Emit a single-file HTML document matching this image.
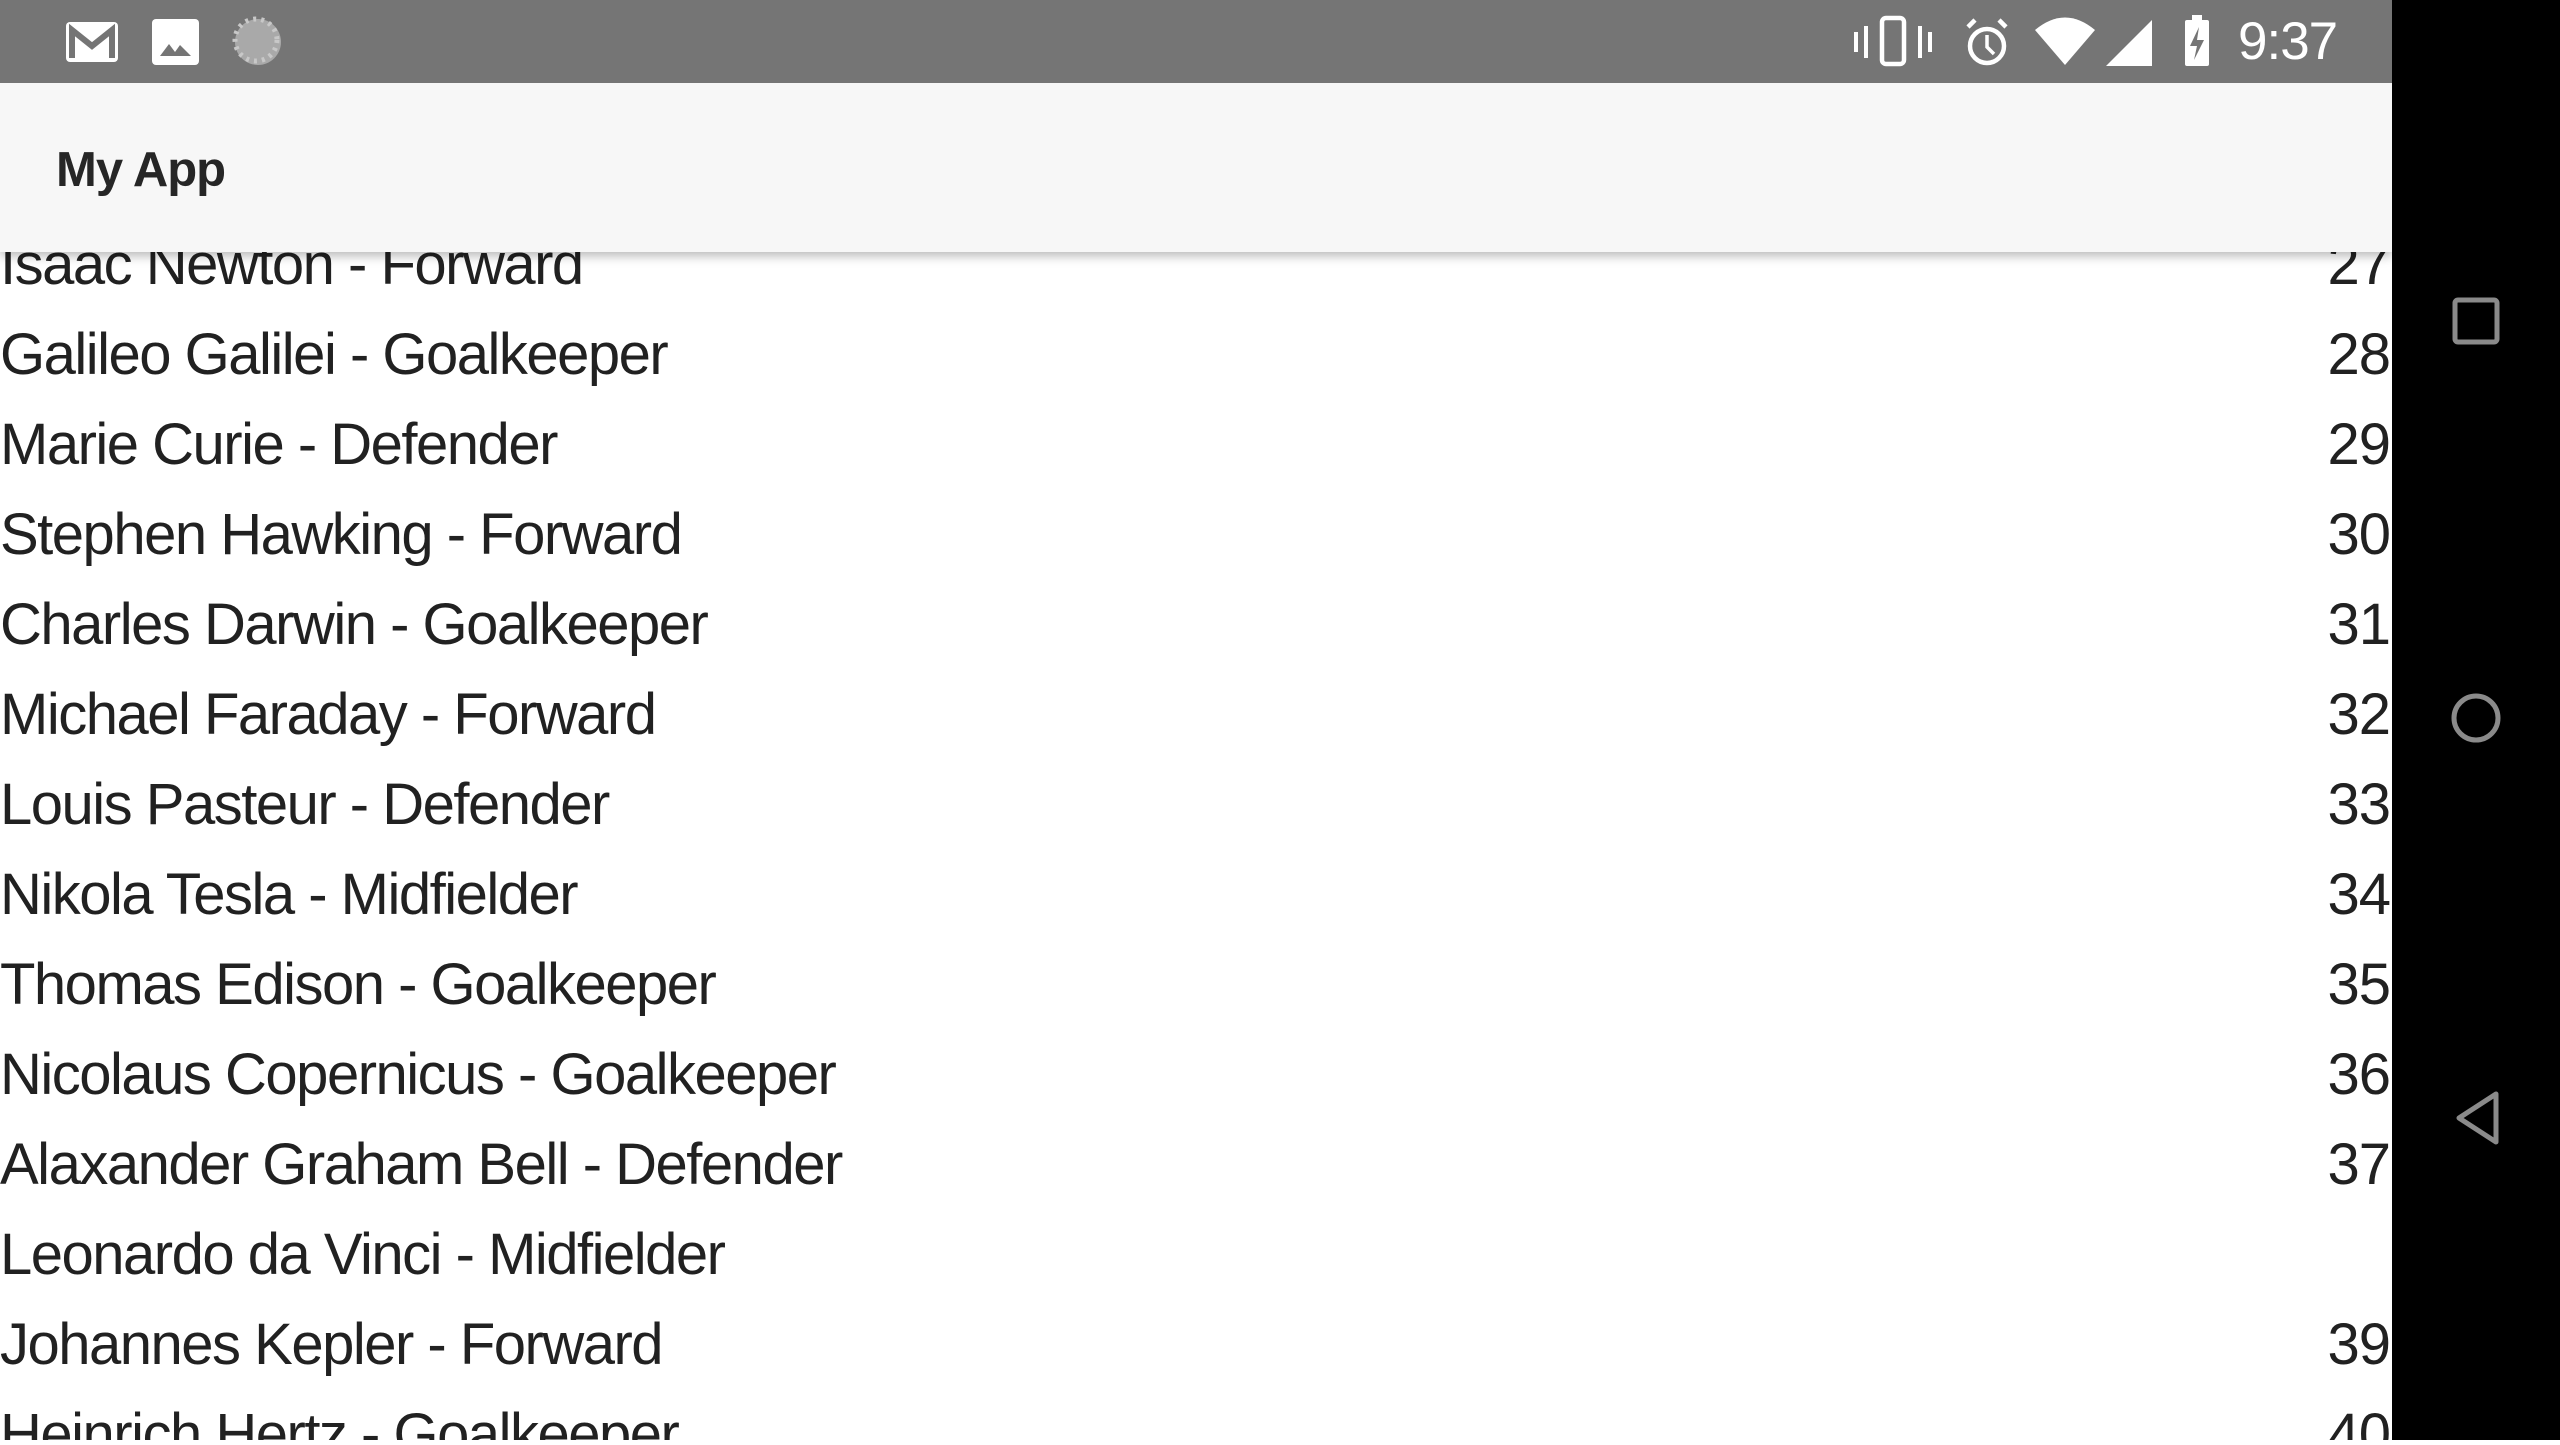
<!DOCTYPE html>
<html><head><meta charset="utf-8"><style>
html,body{margin:0;padding:0;width:2560px;height:1440px;overflow:hidden;background:#fff;font-family:"Liberation Sans",sans-serif}
#list{position:absolute;left:0;top:0;width:2392px;height:1440px;overflow:hidden}
.r{position:absolute;left:0;width:2392px;height:58px;line-height:58px;font-size:58px;color:#212121;letter-spacing:-1.5px;white-space:nowrap}
.r .n{position:absolute;right:2px;top:0;letter-spacing:-1px}
#sb{position:absolute;left:0;top:0;width:2392px;height:83px;background:#757575;z-index:3}
#ab{position:absolute;left:0;top:83px;width:2392px;height:169px;background:#f7f7f7;z-index:2;box-shadow:0 4px 10px rgba(0,0,0,0.28)}
#ab span{position:absolute;left:56px;top:58px;font-size:49px;line-height:58px;font-weight:bold;color:#262626;letter-spacing:-1px}
#nav{position:absolute;left:2392px;top:0;width:168px;height:1440px;background:#000;z-index:4}
#time{position:absolute;left:2238px;top:12px;font-size:53px;line-height:60px;color:#fff;letter-spacing:-1px}
</style></head><body>
<div id="sb">
<svg width="2392" height="83" style="position:absolute;left:0;top:0">
 <rect x="66" y="22" width="52" height="40" rx="4" fill="#fff"/>
 <path d="M72 58 V30 L92 46 L112 30 V58" stroke="#757575" stroke-width="6" fill="none"/>
 <rect x="152" y="19" width="47" height="46" rx="4" fill="#fff"/>
 <path d="M160 56 L169 44 L175 52 L180 45 L191 56 Z" fill="#757575"/>
 <circle cx="258" cy="42" r="23" fill="#a9a9a9"/>
 <circle cx="256" cy="40" r="21" fill="none" stroke="#c8c8c8" stroke-width="5" stroke-dasharray="3 5"/>
 <rect x="1882" y="18" width="22" height="46" rx="4" fill="none" stroke="#fff" stroke-width="4.5"/>
 <path d="M1856 32 V52 M1866 26 V58 M1920 26 V58 M1930 32 V52" stroke="#fff" stroke-width="4"/>
 <circle cx="1987" cy="46" r="17" fill="none" stroke="#fff" stroke-width="4.5"/>
 <path d="M1987 35 V47 L1994 54" stroke="#fff" stroke-width="3.5" fill="none"/>
 <path d="M1968 27 L1975 20 M2006 27 L1999 20" stroke="#fff" stroke-width="4.5"/>
 <path d="M2035 30 Q2065 5 2095 30 L2065 65 Z" fill="#fff"/>
 <path d="M2152 20 V66 H2106 Z" fill="#fff"/>
 <rect x="2185" y="20" width="24" height="46" rx="2" fill="#fff"/>
 <rect x="2192" y="15" width="10" height="6" fill="#fff"/>
 <path d="M2199 27 L2190 46 H2197 L2194 60 L2204 40 H2197 Z" fill="#757575"/>
</svg>
<div id="time">9:37</div>
</div>
<div id="ab"><span>My App</span></div>
<div id="list">
<div class="r" style="top:236px">Isaac Newton - Forward<span class="n">27</span></div>
<div class="r" style="top:326px">Galileo Galilei - Goalkeeper<span class="n">28</span></div>
<div class="r" style="top:416px">Marie Curie - Defender<span class="n">29</span></div>
<div class="r" style="top:506px">Stephen Hawking - Forward<span class="n">30</span></div>
<div class="r" style="top:596px">Charles Darwin - Goalkeeper<span class="n">31</span></div>
<div class="r" style="top:686px">Michael Faraday - Forward<span class="n">32</span></div>
<div class="r" style="top:776px">Louis Pasteur - Defender<span class="n">33</span></div>
<div class="r" style="top:866px">Nikola Tesla - Midfielder<span class="n">34</span></div>
<div class="r" style="top:956px">Thomas Edison - Goalkeeper<span class="n">35</span></div>
<div class="r" style="top:1046px">Nicolaus Copernicus - Goalkeeper<span class="n">36</span></div>
<div class="r" style="top:1136px">Alaxander Graham Bell - Defender<span class="n">37</span></div>
<div class="r" style="top:1226px">Leonardo da Vinci - Midfielder</div>
<div class="r" style="top:1316px">Johannes Kepler - Forward<span class="n">39</span></div>
<div class="r" style="top:1406px">Heinrich Hertz - Goalkeeper<span class="n">40</span></div>
</div>
<div id="nav">
<svg width="168" height="1440">
 <rect x="63" y="300" width="42" height="42" rx="3" fill="none" stroke="#8a8a8a" stroke-width="5"/>
 <circle cx="84" cy="718" r="22" fill="none" stroke="#8a8a8a" stroke-width="5"/>
 <path d="M104 1094 V1142 L67 1118 Z" fill="none" stroke="#8a8a8a" stroke-width="5" stroke-linejoin="round"/>
</svg>
</div>
</body></html>
